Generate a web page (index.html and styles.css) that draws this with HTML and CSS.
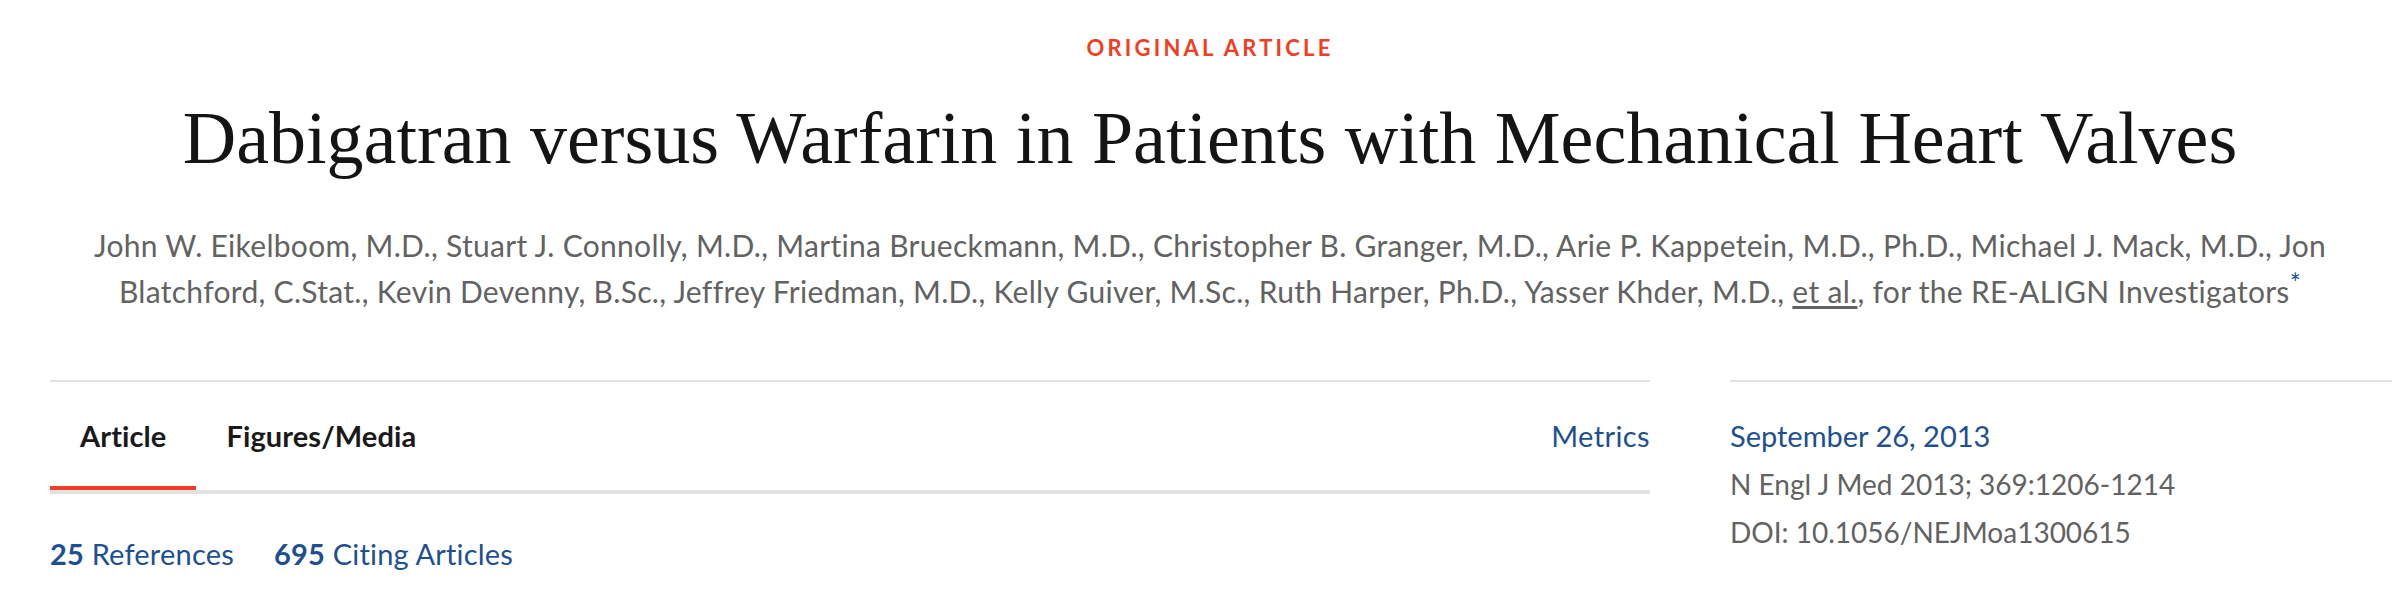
FILE: index.html
```html
<!DOCTYPE html>
<html lang="en">
<head>
<meta charset="utf-8">
<title>Dabigatran versus Warfarin in Patients with Mechanical Heart Valves</title>
<link rel="stylesheet" href="styles.css">
</head>
<body>
<div class="page">
  <header class="article-header">
    <div class="kicker">Original Article</div>
    <h1 class="title">Dabigatran versus Warfarin in Patients with Mechanical Heart Valves</h1>
    <p class="authors">John W. Eikelboom, M.D., Stuart J. Connolly, M.D., Martina Brueckmann, M.D., Christopher B. Granger, M.D., Arie P. Kappetein, M.D., Ph.D., Michael J. Mack, M.D., Jon Blatchford, C.Stat., Kevin Devenny, B.Sc., Jeffrey Friedman, M.D., Kelly Guiver, M.Sc., Ruth Harper, Ph.D., Yasser Khder, M.D., <a class="etal" href="#">et al.</a>, for the RE-ALIGN Investigators<sup class="star">*</sup></p>
  </header>
  <div class="columns">
    <div class="main-col">
      <nav class="tabs">
        <a class="tab active" href="#">Article</a>
        <a class="tab" href="#">Figures/Media</a>
        <a class="metrics" href="#">Metrics</a>
      </nav>
      <div class="refs">
        <a class="ref" href="#"><b>25</b> References</a>
        <a class="ref" href="#"><b>695</b> Citing Articles</a>
      </div>
    </div>
    <aside class="side-col">
      <a class="date" href="#">September 26, 2013</a>
      <div class="meta">N Engl J Med 2013; 369:1206-1214</div>
      <div class="meta">DOI: 10.1056/NEJMoa1300615</div>
    </aside>
  </div>
</div>
</body>
</html>
```
FILE: styles.css
```css
html, body {
  margin: 0;
  padding: 0;
  background: #ffffff;
}
body {
  font-family: "Lato", "Open Sans", sans-serif;
  color: #1a1a1a;
}
a {
  text-decoration: none;
  color: inherit;
}
.page {
  padding: 33px 0 0 50px;
}
.article-header {
  margin-right: 22px;
  text-align: center;
}
.kicker {
  font-size: 22px;
  line-height: 30px;
  font-weight: 700;
  letter-spacing: 3.2px;
  text-transform: uppercase;
  color: #f23d23;
}
.title {
  margin: 31px 0 0;
  font-family: "Liberation Serif", "Times New Roman", serif;
  font-weight: 400;
  font-size: 74px;
  line-height: 88px;
  color: #141414;
}
.authors {
  margin: 40px auto 0;
  font-size: 30px;
  line-height: 46px;
  letter-spacing: 0.3px;
  color: #626262;
}
.etal {
  text-decoration: underline;
  text-underline-offset: 3px;
}
.star {
  color: #1d4f91;
  font-size: 26px;
  vertical-align: 10px;
  line-height: 0;
}
.columns {
  margin-top: 66px;
  display: grid;
  grid-template-columns: 1600px 1fr;
  column-gap: 80px;
}
.main-col {
  border-top: 2px solid #e2e2e2;
}
.tabs {
  display: flex;
  align-items: flex-end;
  border-bottom: 4px solid #e2e2e2;
}
.tab {
  padding: 36px 30px 32px;
  font-size: 29px;
  line-height: 36px;
  letter-spacing: 0.1px;
  font-weight: 700;
  color: #1a1a1a;
  border-bottom: 4px solid transparent;
}
.tab.active {
  border-bottom-color: #f23d23;
}
.metrics {
  margin-left: auto;
  padding: 36px 0 36px;
  font-size: 29px;
  line-height: 36px;
  letter-spacing: 0.4px;
  color: #1d4f91;
}
.refs {
  display: flex;
  gap: 40px;
  margin-top: 42px;
}
.ref {
  font-size: 29px;
  line-height: 36px;
  letter-spacing: 0.2px;
  color: #1d4f91;
}
.ref b {
  font-weight: 700;
}
.side-col {
  border-top: 2px solid #e2e2e2;
  padding-top: 30px;
  display: flex;
  flex-direction: column;
  align-items: flex-start;
}
.date {
  font-size: 29px;
  line-height: 48px;
  color: #1d4f91;
}
.meta {
  font-size: 28px;
  line-height: 48px;
  color: #626262;
}
```
